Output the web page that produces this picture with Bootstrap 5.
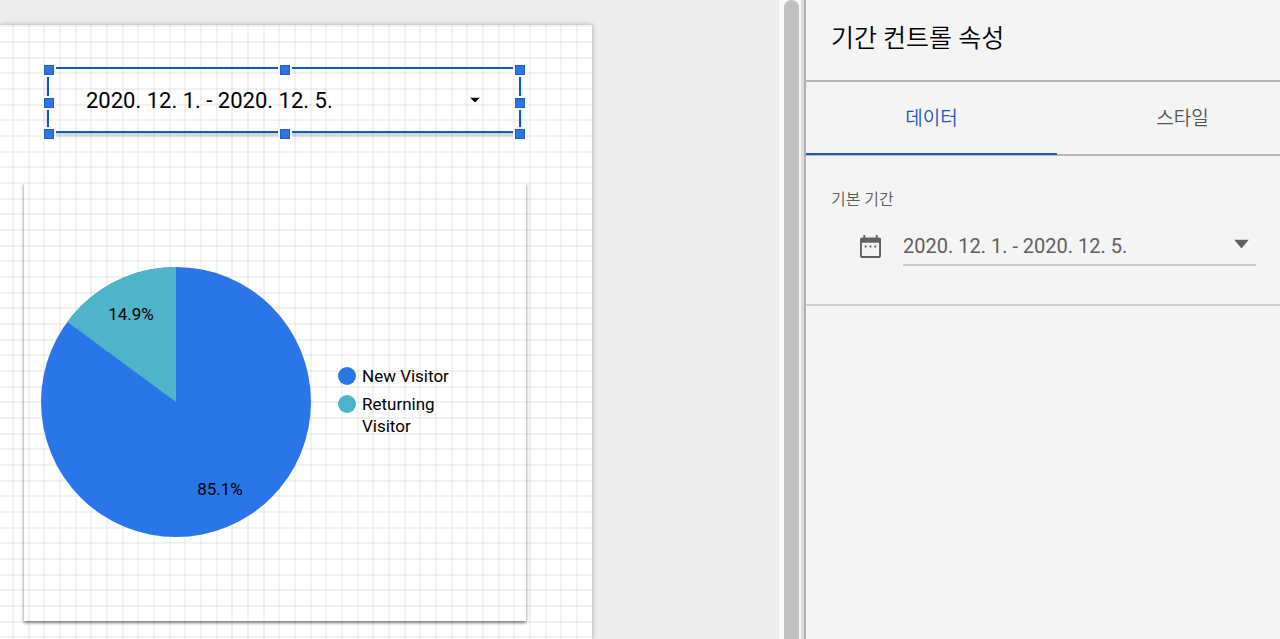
<!DOCTYPE html>
<html lang="ko">
<head>
<meta charset="utf-8">
<meta name="viewport" content="width=device-width, initial-scale=1">
<title>기간 컨트롤 속성</title>
<link rel="stylesheet" href="https://cdn.jsdelivr.net/npm/bootstrap@5.3.0/dist/css/bootstrap.min.css">
<style>
  body { font-family: Roboto, "Noto Sans CJK KR", sans-serif; background: #ededed; color: #000; }

  /* Report page with its snap grid: three lines per 47px tile */
  .report-page {
    margin: 25px 186px 0 0;
    background-color: #fff;
    background-image:
      linear-gradient(90deg, #0000000d 2px, transparent 2px 16px, #0000000d 16px 18px, transparent 18px 31px, #0000000d 31px 33px, transparent 33px),
      linear-gradient(#0000000d 2px, transparent 2px 16px, #0000000d 16px 18px, transparent 18px 31px, #0000000d 31px 33px, transparent 33px);
    background-size: 47px 47px;
    background-position: 12px 0, 0 16px;
    box-shadow: 0 0 5px #0000004d;
  }

  /* Selected date control */
  .date-control { margin: 42px 71px 0 47px; height: 66px; border: 2px solid #1158c7; box-shadow: 0 3px 4px #00000033; }
  .date-control select { padding: 0 70px 0 37px; font-size: 22px; }
  .date-control .arrow { right: 39px; }
  .grip { position: absolute; width: 10px; height: 10px; background: #2f74e0; border: 1px solid #1a60d0; outline: 2px solid #fff; transform: translate(-50%, -50%); }
  .grip-t { top: 1px; } .grip-m { top: 55%; } .grip-b { top: 105%; }
  .grip-l { left: 0; } .grip-c { left: 50%; margin-left: 1px; } .grip-r { left: 100%; margin-left: 1px; }

  .bare-select { appearance: none; border: 0; background: transparent; width: 100%; color: inherit; outline: 0; }
  .arrow { position: absolute; top: 50%; transform: translateY(-50%); pointer-events: none; }

  /* Chart */
  .chart-card { margin: 50px 66px 0 24px; padding: 84px 17px 84px; box-shadow: 0 2px 3px #00000073, 0 0 5px #0000001a; clip-path: inset(0 -6px -8px -6px); }
  .chart-legend { margin: 0 0 2px 27px; width: 120px; font-size: 17px; line-height: 22px; }
  .chart-legend, .chart-legend li { gap: 6px; }
  .dot { width: 18px; height: 18px; margin-top: 2px; }
  .dot-new { background: #2a75e8; }
  .dot-returning { background: #4fb3c9; }

  /* Scroll gutter between canvas and panel */
  .gutter { width: 23px; padding: 0 2px 0 5px; background: #f9f9f9; border-left: 1px solid #e4e4e4; }
  .gutter-thumb { background: #c0c0c0; border-radius: 8px 8px 0 0; }
  .splitter { width: 5px; background: #dcdcdc; border-right: 2px solid #b0b0b0; }

  /* Properties panel */
  .props { width: 474px; background: #f4f4f4; }
  .props-title { height: 82px; padding: 0 25px 2px; font-size: 25px; font-weight: 350; border-bottom: 2px solid #b3b3b3; }
  .props-tabs { height: 74px; border-bottom: 2px solid #b8b8b8; }
  .props-tabs button { flex: 0 0 251px; height: 73px; padding: 3px 0 0; font-size: 19px; font-weight: 350; color: #555; background: transparent; border: 0; border-bottom: 2px solid transparent; }
  .props-tabs button.active { color: #1a54bd; border-bottom-color: #1f57bd; }
  .props-section { padding: 31px 24px 38px 25px; border-bottom: 2px solid #cfcfcf; color: #616161; }
  .props-section label { font-size: 16px; line-height: 26px; font-weight: 350; color: #5c5c5c; }
  .range-row { margin-top: 14px; padding-left: 29px; gap: 22px; }
  .range-field { height: 39px; border-bottom: 2px solid #cccccc; }
  .range-field select { padding: 0 40px 0 0; font-size: 20px; color: #5f5f5f; }
  .range-field .arrow { right: 7px; top: 17px; }
</style>
</head>
<body class="d-flex vh-100 overflow-hidden">

<main class="d-flex flex-column flex-grow-1 overflow-hidden">
  <div class="report-page flex-grow-1">
    <div class="date-control position-relative d-flex">
      <select class="bare-select" aria-label="기간">
        <option>2020. 12. 1. - 2020. 12. 5.</option>
      </select>
      <svg class="arrow" width="10" height="5" viewBox="0 0 10 5" aria-hidden="true"><path d="M0 0h10L5 5z"/></svg>
      <span class="grip grip-t grip-l"></span><span class="grip grip-t grip-c"></span><span class="grip grip-t grip-r"></span>
      <span class="grip grip-m grip-l"></span><span class="grip grip-m grip-r"></span>
      <span class="grip grip-b grip-l"></span><span class="grip grip-b grip-c"></span><span class="grip grip-b grip-r"></span>
    </div>

    <section class="chart-card d-flex align-items-center">
      <svg class="flex-shrink-0" width="270" height="270" viewBox="0 0 270 270" role="img" aria-label="New Visitor 85.1%, Returning Visitor 14.9%">
        <circle cx="135" cy="135" r="135" fill="#2a75e8"/>
        <path d="M135 135V0A135 135 0 0 0 26.300 55.000z" fill="#4fb3c9"/>
        <text x="90" y="53" font-size="17" text-anchor="middle">14.9%</text>
        <text x="179" y="228" font-size="17" text-anchor="middle">85.1%</text>
      </svg>
      <ul class="chart-legend list-unstyled d-flex flex-column">
        <li class="d-flex"><span class="dot dot-new rounded-circle flex-shrink-0"></span><span>New Visitor</span></li>
        <li class="d-flex"><span class="dot dot-returning rounded-circle flex-shrink-0"></span><span>Returning Visitor</span></li>
      </ul>
    </section>
  </div>
</main>

<div class="gutter d-flex flex-shrink-0"><div class="gutter-thumb flex-grow-1"></div></div>
<div class="splitter flex-shrink-0"></div>

<aside class="props flex-shrink-0 overflow-hidden">
  <h1 class="props-title d-flex align-items-center mb-0">기간 컨트롤 속성</h1>
  <div class="props-tabs d-flex" role="tablist">
    <button type="button" class="active" role="tab" aria-selected="true">데이터</button>
    <button type="button" role="tab" aria-selected="false">스타일</button>
  </div>
  <div class="props-section">
    <label for="range" class="d-block">기본 기간</label>
    <div class="range-row d-flex align-items-center">
      <svg class="flex-shrink-0" width="21" height="23" viewBox="0 0 22 24" fill="#616161" aria-hidden="true">
        <path fill-rule="evenodd" d="M3.500 0h2v2.500h11V0h2v2.500H20a2 2 0 0 1 2 2V22a2 2 0 0 1-2 2H2a2 2 0 0 1-2-2V4.500a2 2 0 0 1 2-2h1.500zM2 8v14h18V8z"/>
        <path d="M5 11h2v2H5zM10 11h2v2h-2zM15 11h2v2h-2z"/>
      </svg>
      <div class="range-field position-relative flex-grow-1 d-flex">
        <select id="range" class="bare-select">
          <option>2020. 12. 1. - 2020. 12. 5.</option>
        </select>
        <svg class="arrow" width="15" height="9" viewBox="0 0 15 9" fill="#616161" aria-hidden="true"><path d="M0 0h15L7.500 9z"/></svg>
      </div>
    </div>
  </div>
</aside>

<script src="https://cdn.jsdelivr.net/npm/bootstrap@5.3.0/dist/js/bootstrap.bundle.min.js"></script>
</body>
</html>
